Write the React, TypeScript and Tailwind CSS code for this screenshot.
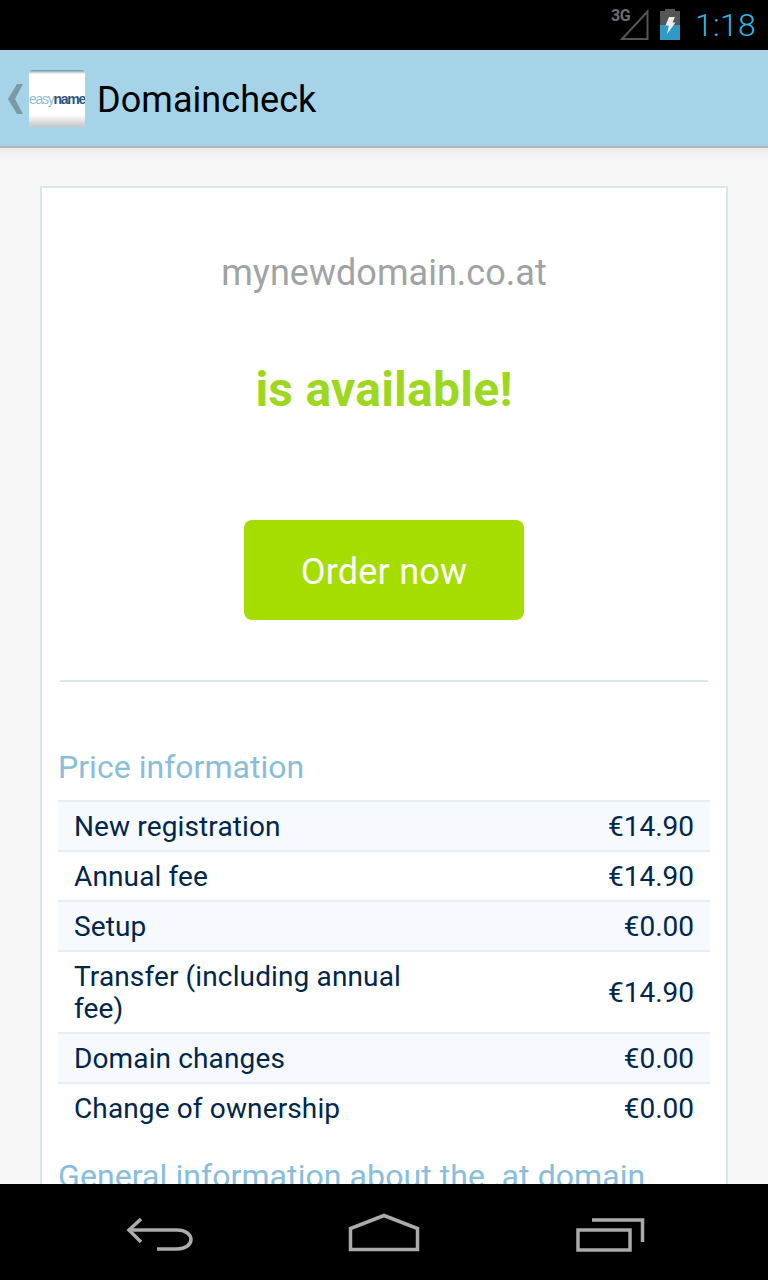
const rows = [
  { label: "New registration", price: "€14.90", alt: true },
  { label: "Annual fee", price: "€14.90", alt: false },
  { label: "Setup", price: "€0.00", alt: true },
  { label: "Transfer (including annual fee)", price: "€14.90", alt: false },
  { label: "Domain changes", price: "€0.00", alt: true },
  { label: "Change of ownership", price: "€0.00", alt: false },
];

function StatusBar() {
  return (
    <div className="h-[50px] shrink-0 bg-black relative">
      <span className="absolute left-[611px] top-[8px] text-[16px] leading-[16px] font-bold tracking-[-0.5px] text-[#6e6e6e]">3G</span>
      <svg width="32" height="34" viewBox="0 0 32 34" className="absolute left-[619px] top-[8px]">
        <path d="M28.5 3.5 V31 H3 Z" fill="none" stroke="#555" strokeWidth="2" />
      </svg>
      <svg width="20" height="32" viewBox="0 0 20 32" className="absolute left-[660px] top-[9px]">
        <rect x="5" y="0" width="10" height="2" fill="#555" />
        <rect x="0" y="2" width="20" height="14" fill="#555" />
        <rect x="0" y="16" width="20" height="15" fill="#3299c4" />
        <path d="M9 8 H15 L12.5 13.500 H15.500 L7 25 L9 16.500 H5.500 Z" fill="#eeeeee" />
      </svg>
      <span className="absolute left-[695px] top-[6px] text-[32px] leading-[38px] font-light tracking-[0.3px] text-[#33b5e5]">1:18</span>
    </div>
  );
}

function ActionBar() {
  return (
    <div className="h-[98px] shrink-0 bg-[#a5d3e8] border-b-2 border-[#b8b4b4] flex items-center">
      <svg width="16" height="30" viewBox="0 0 16 30" className="ml-[8px] mt-[2px] shrink-0">
        <path d="M15 0 H9 L0 15 L9 30 H15 L7 15 Z" fill="#7b9aa8" />
      </svg>
      <div className="w-[56px] h-[57px] ml-[5px] rounded-[3px] overflow-hidden shrink-0 flex flex-col bg-white">
        <div className="h-[4px] shrink-0 bg-gradient-to-b from-[#6f93a6] to-white" />
        <div className="flex-1 flex items-center justify-center pt-[9px]">
          <span className="text-[14px] leading-[18px] font-bold tracking-[-1.25px] whitespace-nowrap font-['Liberation_Sans',sans-serif]">
            <span className="text-[#8fbcd8] font-normal">easy</span>
            <span className="text-[#2c5480]">name</span>
          </span>
        </div>
        <div className="h-[12px] shrink-0 bg-gradient-to-b from-white to-[#c4c4c4]" />
      </div>
      <span className="ml-[12px] mt-[4px] text-[36px] leading-[44px] tracking-[0.05px] text-black">Domaincheck</span>
    </div>
  );
}

function NavBar() {
  return (
    <div className="h-[96px] shrink-0 bg-black relative">
      <svg width="768" height="96" viewBox="0 0 768 96" className="absolute left-0 top-0">
        <g fill="none" stroke="#ababab" strokeWidth="3.500">
          <path d="M141 35 L129 46 L141 58" />
          <path d="M129 46 H177 C185 46 191 50 191 55.500 C191 61 185 65 177 65 H157" />
          <path d="M350.500 65.500 V44.500 L384 31.500 L417.500 44.500 V65.500 Z" />
          <path d="M578 46 H630 V66 H578 Z" />
          <path d="M592 36 H642.500 V58" />
        </g>
      </svg>
    </div>
  );
}

export default function App() {
  return (
    <div className="w-[768px] h-[1280px] flex flex-col overflow-hidden bg-[#f7f7f7] font-['Roboto',sans-serif]">
      <StatusBar />
      <ActionBar />
      <main className="flex-1 min-h-0 overflow-hidden bg-gradient-to-b from-[#ececec] to-[#f7f7f7] to-[12px] pt-[38px] px-[40px]">
        <div className="border-2 border-[#d7e6e8] bg-white px-[16px]">
          <div className="pt-[60px] text-center text-[36px] leading-[50px] tracking-[0.03px] text-[#a0a3a5]">mynewdomain.co.at</div>
          <div className="mt-[67px] text-center text-[48px] leading-[50px] font-bold tracking-[0.25px] text-[#9dd81f]">is available!</div>
          <div className="mt-[105px] flex justify-center">
            <button className="w-[280px] h-[100px] rounded-[8px] bg-[#a6dd00] text-white text-[36px] tracking-[0.2px] pt-[4px]">Order now</button>
          </div>
          <div className="mt-[60px] mx-[2px] h-[2px] bg-[#d7e6e8]" />
          <h2 className="mt-[63px] text-[32px] leading-[44px] font-normal tracking-[0.03px] text-[#88bedb]">Price information</h2>
          <div className="mt-[11px]">
            {rows.map((r) => (
              <div key={r.label} className={`flex items-center justify-between border-t-2 border-[#e6eff6] pt-[9px] pb-[7px] px-[16px] text-[28px] leading-[32px] text-[#00264d] ${r.alt ? "bg-[#f6f9fe]" : "bg-white"}`}>
                <span className="w-[345px] tracking-[0.13px]">{r.label}</span>
                <span>{r.price}</span>
              </div>
            ))}
          </div>
          <h2 className="mt-[22px] text-[32px] leading-[44px] font-normal tracking-[0.08px] text-[#88bedb] whitespace-nowrap">General information about the .at domain</h2>
        </div>
      </main>
      <NavBar />
    </div>
  );
}
